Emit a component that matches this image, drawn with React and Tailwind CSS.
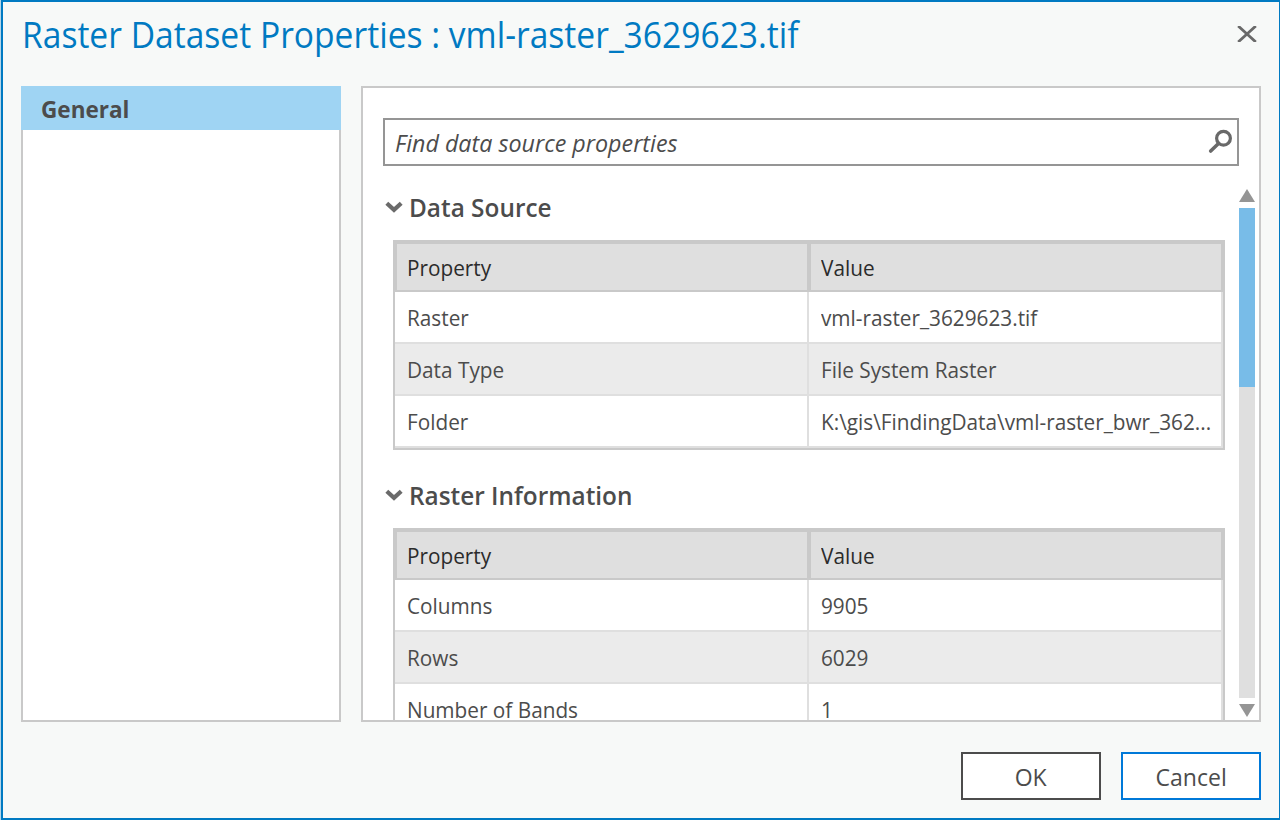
const dataSource = [
  ["Raster", "vml-raster_3629623.tif"],
  ["Data Type", "File System Raster"],
  ["Folder", "K:\\gis\\FindingData\\vml-raster_bwr_362..."],
];

const rasterInformation = [
  ["Columns", "9905"],
  ["Rows", "6029"],
  ["Number of Bands", "1"],
];

function Label({ children }) {
  return <span className="inline-block origin-left scale-x-[0.944] whitespace-nowrap">{children}</span>;
}

function PropertyTable({ rows }) {
  return (
    <div className="ml-[10px] w-[832px] shrink-0 border-2 border-[#c9c9c9] text-[22px] leading-[50px] text-[#4c4c4c]">
      <div className="grid h-[50px] grid-cols-2 text-[#2b2b2b]">
        <div className="border-2 border-[#c9c9c9] bg-[#dfdfdf] pl-[10px] leading-[46px]"><Label>Property</Label></div>
        <div className="border-2 border-[#c9c9c9] bg-[#dfdfdf] pl-[10px] leading-[46px]"><Label>Value</Label></div>
      </div>
      {rows.map(([name, value]) => (
        <div key={name} className="grid h-[52px] grid-cols-2 bg-white odd:bg-[#ebebeb]">
          <div className="border-r-2 border-b-2 border-[#dfdfdf] pl-[12px]"><Label>{name}</Label></div>
          <div className="border-r-2 border-b-2 border-[#dfdfdf] pl-[12px]"><Label>{value}</Label></div>
        </div>
      ))}
    </div>
  );
}

function SectionTitle({ children }) {
  return (
    <div className="flex h-[34px] shrink-0 items-center text-[25px] font-semibold leading-[34px] text-[#4c4c4c]">
      <svg className="mr-[6px] ml-[2px] h-[12px] w-[18px] shrink-0" viewBox="0 0 18 12" fill="none" stroke="#6a6a6a" strokeWidth="4.2">
        <path d="M1.8 2.2 L9 8.8 L16.2 2.2" />
      </svg>
      <span className="origin-left scale-x-[0.975]">{children}</span>
    </div>
  );
}

export default function App() {
  return (
    <div className="h-[820px] w-[1280px] overflow-hidden bg-[#b5d5e8] pl-px font-['Open_Sans','Noto_Sans',sans-serif]">
      <div className="flex h-[820px] flex-col border-2 border-r border-[#007ac2] bg-[#f7f9f8]">
        <header className="flex h-[84px] shrink-0 justify-between pr-[22px] pl-[19px]">
          <h1 className="origin-left scale-x-[0.933] text-[36px] leading-[66px] whitespace-nowrap text-[#007ac2]">Raster Dataset Properties : vml-raster_3629623.tif</h1>
          <svg className="mt-[24px] h-[16px] w-[20px]" viewBox="0 0 20 16" fill="none" stroke="#696969" strokeWidth="2.8">
            <path d="M1.2 0 L18.8 16 M18.8 0 L1.2 16" />
          </svg>
        </header>
        <main className="flex h-[636px] shrink-0 gap-[20px] pl-[18px]">
          <nav className="w-[320px] border-2 border-t-0 border-[#c9c9c9] bg-white">
            <div className="-mx-[2px] h-[44px] bg-[#9fd4f3] pl-[20px] text-[23px] leading-[46px] font-bold text-[#4c4c4c]">
              <span className="inline-block origin-left scale-x-[0.98]">General</span>
            </div>
          </nav>
          <section className="flex w-[900px] flex-col overflow-hidden border-2 border-[#c9c9c9] bg-white">
            <div className="mt-[30px] ml-[20px] flex h-[48px] w-[856px] shrink-0 items-start justify-between border-2 border-[#959595] pr-[4px] pl-[10px]">
              <span className="origin-left scale-x-[0.97] text-[24px] leading-[46px] text-[#4c4c4c] italic">Find data source properties</span>
              <svg className="mt-[9px] h-[26px] w-[26px]" viewBox="0 0 26 26" fill="none" stroke="#696969">
                <circle cx="16.5" cy="9.2" r="6.9" strokeWidth="3.2" />
                <path d="M11.5 14.5 L3.7 22" strokeWidth="3.6" strokeLinecap="round" />
              </svg>
            </div>
            <div className="flex min-h-0 flex-1">
              <div className="ml-[20px] flex w-[844px] flex-col overflow-hidden pt-[24px]">
                <SectionTitle>Data Source</SectionTitle>
                <div className="h-[16px] shrink-0" />
                <PropertyTable rows={dataSource} />
                <div className="h-[28px] shrink-0" />
                <SectionTitle>Raster Information</SectionTitle>
                <div className="h-[16px] shrink-0" />
                <PropertyTable rows={rasterInformation} />
              </div>
              <div className="ml-[12px] flex w-[16px] shrink-0 flex-col pt-[23px]">
                <svg className="h-[13px] w-[16px]" viewBox="0 0 16 13" fill="#959595"><path d="M8 0 L16 13 H0 Z" /></svg>
                <div className="mt-[6px] h-[490px] bg-[#dfdfdf]"><div className="h-[179px] bg-[#78bce8]" /></div>
                <svg className="mt-[6px] h-[13px] w-[16px]" viewBox="0 0 16 13" fill="#959595"><path d="M8 13 L16 0 H0 Z" /></svg>
              </div>
            </div>
          </section>
        </main>
        <footer className="flex justify-end gap-[20px] pt-[30px] pr-[18px] text-[24px] leading-[42px] text-[#4c4c4c]">
          <button className="h-[48px] w-[140px] border-2 border-[#4c4c4c] bg-white pt-[2px]"><span className="inline-block scale-x-[0.96]">OK</span></button>
          <button className="h-[48px] w-[140px] border-2 border-[#0079d8] bg-white pt-[2px]"><span className="inline-block scale-x-[0.96]">Cancel</span></button>
        </footer>
      </div>
    </div>
  );
}
